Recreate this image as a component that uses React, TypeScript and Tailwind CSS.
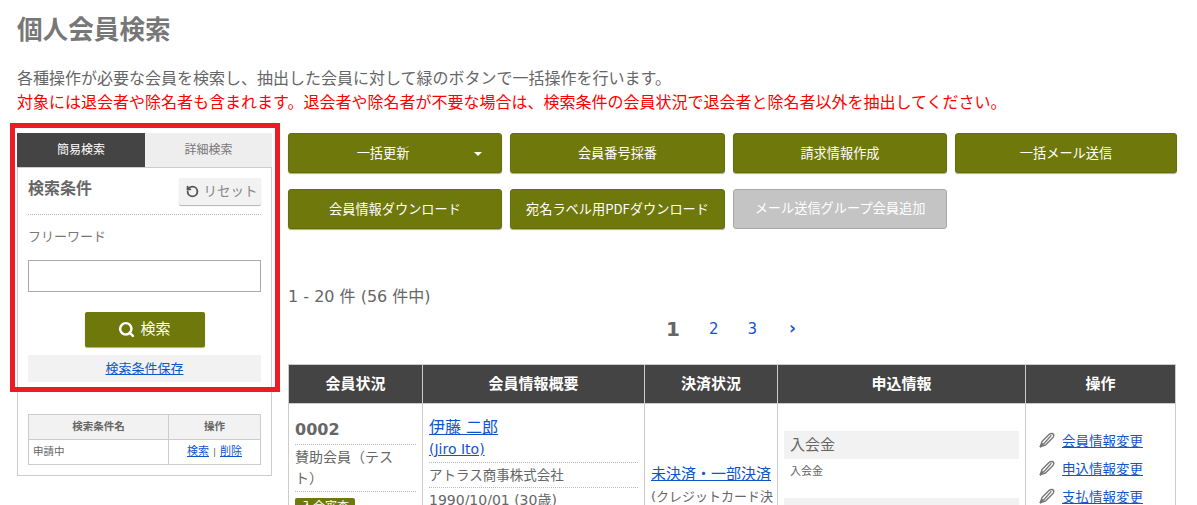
import { Search, RotateCcw } from "lucide-react";

const jpFont = "font-['Noto_Sans_CJK_JP',sans-serif]";

function OliveButton({ label, caret }: { label: string; caret?: boolean }) {
  return (
    <button className={`relative h-10 rounded-[3px] border border-[#666f0a] bg-[#6f780b] text-[13.2px] text-white shadow-[0_1px_1px_rgba(0,0,0,0.35)] ${jpFont} ${caret ? "pr-[24px]" : ""}`}>
      {label}
      {caret && (
        <span className="absolute right-[19px] top-[18px] h-0 w-0 border-x-[4px] border-t-[4px] border-x-transparent border-t-white" />
      )}
    </button>
  );
}

function Sidebar() {
  return (
    <aside className="w-[255px] shrink-0">
      <div className="flex h-[34px] text-[12px]">
        <div className="flex w-[128px] items-center justify-center bg-[#444444] text-white">簡易検索</div>
        <div className="flex w-[127px] items-center justify-center bg-[#eeeeee] text-[#777]">詳細検索</div>
      </div>
      <div className="h-[309px] border border-[#cccccc] px-[10px]">
        <div className="flex h-[47px] items-start justify-between border-b border-dotted border-[#bbb] pt-[10px]">
          <h3 className="mt-[1px] text-[16px] leading-[20px] font-bold text-[#666]">検索条件</h3>
          <button className="flex h-[27px] w-[82px] items-center justify-center gap-[5px] rounded-[2px] bg-[#f2f2f2] pl-[3px] text-[13.5px] text-[#888] shadow-[0_1px_1px_rgba(0,0,0,0.3)]">
            <RotateCcw size={13} strokeWidth={3.5} className="text-[#555]" />
            リセット
          </button>
        </div>
        <p className="mt-[12px] text-[13px] leading-[20px] text-[#777]">フリーワード</p>
        <input className="mt-[13px] block h-[32px] w-full border border-[#aaaaaa] bg-white" />
        <button className="mx-auto mt-[20px] flex h-[35px] w-[120px] items-center justify-center gap-[5px] rounded-[2px] bg-[#6f780b] text-[15px] text-white shadow-[0_1px_1px_rgba(0,0,0,0.35)]">
          <Search size={17} strokeWidth={3.5} />
          検索
        </button>
        <div className="mt-[8px] flex h-[27px] items-center justify-center bg-[#f2f2f2] text-[13px] text-[#1155cc] underline">
          検索条件保存
        </div>
        <table className="mt-[32px] w-full table-fixed border-collapse border border-[#cccccc] text-[10.5px] text-[#666]">
          <tbody>
            <tr className="h-[25px] bg-[#f2f2f2] font-bold">
              <td className="w-[140px] border border-[#cccccc] text-center">検索条件名</td>
              <td className="border border-[#cccccc] text-center">操作</td>
            </tr>
            <tr className="h-[25px]">
              <td className="border border-[#cccccc] pl-[4px]">申請中</td>
              <td className="border border-[#cccccc] text-center text-[11px]">
                <span className="text-[#1155cc] underline">検索</span>
                <span className="mx-[4px] text-[9px]">|</span>
                <span className="text-[#1155cc] underline">削除</span>
              </td>
            </tr>
          </tbody>
        </table>
      </div>
    </aside>
  );
}

function PencilIcon() {
  return (
    <svg width="16" height="16" viewBox="0 0 16 16" fill="none" stroke="#777" strokeWidth="1.4" strokeLinejoin="round" strokeLinecap="round">
      <path d="M1.5 14.5 L3 9.5 L10 2.6 C11.5 1.2 14 1.2 14.6 2.6 C15.2 4 14.2 5.4 13 6.6 L6.5 13 Z" />
      <path d="M1.5 14.5 L6 10.5 L12 3.6" />
      <path d="M1.5 14.5 L3 12" strokeWidth="2" />
    </svg>
  );
}

function ActionLink({ label }: { label: string }) {
  return (
    <div className={`flex h-[28px] items-center gap-[7px] text-[13.5px] ${jpFont}`}>
      <PencilIcon />
      <span className="text-[#1155cc] underline">{label}</span>
    </div>
  );
}

function MemberTable() {
  const th = "border-l border-[#cccccc] text-center text-[15px] font-bold text-white";
  return (
    <table className="mt-[23px] w-[888px] table-fixed border-collapse border border-[#cccccc] text-[14px] text-[#666]">
      <thead>
        <tr className="h-[39px] bg-[#444444]">
          <th className={th + " w-[134px]"}>会員状況</th>
          <th className={th + " w-[222px]"}>会員情報概要</th>
          <th className={th + " w-[133px]"}>決済状況</th>
          <th className={th + " w-[248px]"}>申込情報</th>
          <th className={th}>操作</th>
        </tr>
      </thead>
      <tbody>
        <tr>
          <td className="border border-[#cccccc] px-[6px] pt-[14px] align-top">
            <div className="border-b border-dotted border-[#bbb] pb-[2px] text-[16px] leading-[24px] font-bold">0002</div>
            <div className="border-b border-dotted border-[#bbb] py-[2px] pr-[14px] leading-[21px]">賛助会員（テスト）</div>
            <span className="mt-[6px] block w-fit rounded-[2px] bg-[#6f780b] px-[6px] text-[12px] leading-[18px] text-white">入会審査</span>
          </td>
          <td className="border border-[#cccccc] px-[6px] pt-[13px] align-top">
            <div className="text-[16px] leading-[21px] text-[#1155cc] underline">伊藤 二郎</div>
            <div className="border-b border-dotted border-[#bbb] pb-[2px] leading-[22px] text-[#1155cc] underline">(Jiro Ito)</div>
            <div className="border-b border-dotted border-[#bbb] py-[1px] text-[13.5px] leading-[22px]">アトラス商事株式会社</div>
            <div className="py-[1px] leading-[22px]">1990/10/01 (30歳)</div>
          </td>
          <td className="border border-[#cccccc] px-[6px] pt-[57px] align-top">
            <div className="text-[15px] leading-[26px] whitespace-nowrap text-[#1155cc] underline">未決済・一部決済</div>
            <div className="text-[13px] leading-[20px] whitespace-nowrap">
              (クレジットカード決
              <br />
              済)
            </div>
          </td>
          <td className="border border-[#cccccc] px-[6px] pt-[27px] align-top">
            <div className="flex h-[28px] items-center bg-[#f2f2f2] px-[6px] text-[15px]">入会金</div>
            <div className="px-[6px] pt-[4px] text-[11px] leading-[18px]">入会金</div>
            <div className="mt-[17px] h-[28px] bg-[#f2f2f2]" />
          </td>
          <td className="border border-[#cccccc] px-[13px] pt-[22px] align-top">
            <ActionLink label="会員情報変更" />
            <ActionLink label="申込情報変更" />
            <ActionLink label="支払情報変更" />
          </td>
        </tr>
      </tbody>
    </table>
  );
}

export default function App() {
  return (
    <main className="relative h-[505px] w-[1197px] overflow-hidden bg-white pl-[17px] font-['DejaVu_Sans','Noto_Sans_CJK_JP',sans-serif] text-[#666]">
      <h1 className={`pt-[11px] text-[25.6px] leading-[34px] font-bold text-[#777] ${jpFont}`}>個人会員検索</h1>
      <p className="mt-[22px] text-[16px] leading-[24px]">各種操作が必要な会員を検索し、抽出した会員に対して緑のボタンで一括操作を行います。</p>
      <p className="text-[16px] leading-[24px] text-[#ff0000]">対象には退会者や除名者も含まれます。退会者や除名者が不要な場合は、検索条件の会員状況で退会者と除名者以外を抽出してください。</p>

      <div className="mt-[18px] flex gap-[16px]">
        <Sidebar />
        <section className="w-[889px]">
          <div className="grid grid-cols-[214px_215px_214px_222px] gap-x-[8px] gap-y-[16px]">
            <OliveButton label="一括更新" caret />
            <OliveButton label="会員番号採番" />
            <OliveButton label="請求情報作成" />
            <OliveButton label="一括メール送信" />
            <OliveButton label="会員情報ダウンロード" />
            <OliveButton label="宛名ラベル用PDFダウンロード" />
            <button className="h-10 rounded-[3px] border border-[#aaa] bg-[#c4c4c4] text-[13.2px] text-white">メール送信グループ会員追加</button>
          </div>
          <p className="mt-[57px] text-[16px] leading-[22px]">1 - 20 件 (56 件中)</p>
          <nav className="mt-[9px] flex h-[24px] items-center justify-center gap-[29px] pr-[3px] text-[15px] text-[#1155cc]">
            <span className="text-[20px] font-bold text-[#666]">1</span>
            <span>2</span>
            <span>3</span>
            <span className="ml-[3px] text-[17px] font-bold">›</span>
          </nav>
          <MemberTable />
        </section>
      </div>

      <div className="pointer-events-none absolute left-[10px] top-[123px] h-[269px] w-[270px] border-[5px] border-[#ed1c24]" />
    </main>
  );
}
